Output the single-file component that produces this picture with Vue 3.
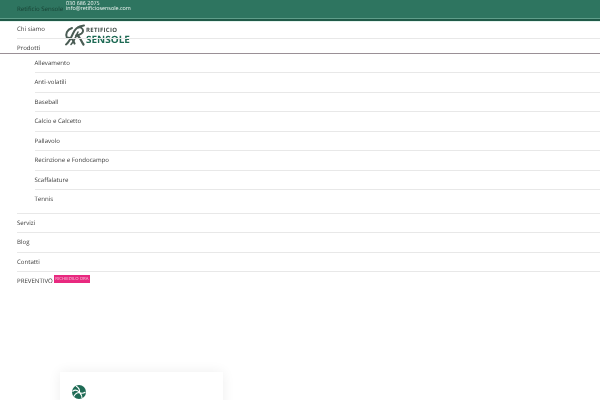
<script setup>
const subs = ['Allevamento','Anti-volatili','Baseball','Calcio e Calcetto','Pallavolo','Recinzione e Fondocampo','Scaffalature','Tennis']
</script>

<template>
  <div class="page">
    <ul class="menu">
      <li class="row first">Retificio Sensole</li>
      <li class="row">Chi siamo</li>
      <li class="parent">
        <div class="parent-label">Prodotti</div>
        <ul class="sub">
          <li v-for="s in subs" :key="s" class="subrow">{{ s }}</li>
        </ul>
      </li>
      <li class="row">Servizi</li>
      <li class="row">Blog</li>
      <li class="row">Contatti</li>
      <li class="row last">PREVENTIVO<span class="badge">RICHIEDILO ORA</span></li>
    </ul>

    <header class="header">
      <div class="topbar">
        <div class="contact">030 686 2075<br>info@retificiosensole.com</div>
      </div>
      <div class="logo">
        <svg width="22" height="23" viewBox="0 0 22 23" fill="none" stroke="#4a5c54" stroke-linecap="round">
          <path d="M2 20.500C5 18.500 7 14 9 9.500S13 2.500 20 1.500" stroke-width="2"/>
          <path d="M7 20.500C10 17.500 12 12.500 14 8" stroke-width="1.600"/>
          <path d="M3 14C1 10 3 5.500 8 4" stroke-width="2"/>
          <path d="M3 14C6 13 9 15 10.500 19.500" stroke-width="2.200"/>
          <path d="M14 3.500C19 3 20.500 7 17.500 9.500C15.500 11 13.500 11.500 12 11.500" stroke-width="1.800"/>
          <path d="M13 11.500C16 12.500 17 17 19.500 20.500" stroke-width="2.200"/>
        </svg>
        <div class="logo-text">
          <span class="l1">RETIFICIO</span>
          <span class="l2">SENSOLE</span>
        </div>
      </div>
    </header>

    <div class="card">
      <svg class="ball" width="14" height="14" viewBox="0 0 14 14">
        <circle cx="7" cy="7" r="7" fill="#1f6b55"/>
        <path d="M4 1C6.500 2.500 8 4.500 7.500 7.500M.5 6.500C3 4.500 5.500 5 7.500 7.500M1.800 11.500C3 9 5 7.500 7.500 7.500M10 13.300C10 11 9 9 7.500 7.500M13.500 7C11.500 8.500 9.500 8.500 7.500 7.500" stroke="#fff" stroke-width="1.100" fill="none"/>
      </svg>
    </div>
  </div>
</template>

<style>
html, body { margin: 0; background: #fff; }
</style>

<style scoped>
.page {
  position: relative;
  width: 600px;
  height: 400px;
  overflow: hidden;
  background: #fff;
  font-family: "Open Sans", sans-serif;
  font-size: 6.100px;
  text-rendering: geometricPrecision;
  color: #3a3a3a;
}
.menu, .sub { list-style: none; margin: 0; padding: 0; }
.menu {
  position: relative;
  z-index: 1;
  padding-left: 17px;
  will-change: transform;
}
.row {
  height: 19.500px;
  line-height: 17.500px;
  border-bottom: 1px solid #e8e8e8;
  box-sizing: border-box;
}
.first { border-bottom-color: transparent; color: #173f32; line-height: 18.500px; }
.last { border-bottom: 0; display: flex; align-items: flex-start; }
.parent { border-bottom: 1px solid #e8e8e8; padding-bottom: 3px; }
.parent-label { height: 14.500px; line-height: 17.500px; }
.sub { padding-left: 17.500px; }
.subrow {
  height: 19.500px;
  line-height: 18px;
  box-sizing: border-box;
  border-bottom: 1px solid #e8e8e8;
}
.subrow:last-child { border-bottom: 0; }
.badge {
  margin: 2.500px 0 0 1px;
  background: #e8297f;
  color: #f8c8de;
  font-size: 4.300px;
  line-height: 8px;
  height: 8px;
  padding: 0 1.500px;
}
.header {
  position: absolute;
  top: 0;
  left: 0;
  width: 600px;
  height: 54px;
  border-bottom: 1px solid #9a9096;
  box-sizing: border-box;
}
.topbar {
  height: 21px;
  background: #2e7560;
  padding-left: 66px;
  border-bottom: 2px solid #1f5a48;
  box-shadow: inset 0 -1px 0 #5f9e8a, 0 1px 0 #e4f3ee;
  box-sizing: border-box;
  will-change: transform;
}
.contact {
  color: #eef5f2;
  font-size: 5.400px;
  line-height: 5.500px;
  padding-top: 0.500px;
}
.logo {
  position: absolute;
  left: 64px;
  top: 24px;
  display: flex;
  align-items: center;
  will-change: transform;
}
.logo-text {
  display: flex;
  flex-direction: column;
  font-weight: 700;
  color: #1f6b55;
  margin-top: -1px;
}
.l1 { font-size: 6px; letter-spacing: 0.300px; line-height: 7px; color: #3d4a45; }
.l2 { font-size: 10px; line-height: 10px; }
.card {
  position: absolute;
  left: 60px;
  top: 372px;
  width: 163px;
  height: 60px;
  background: #fff;
  box-shadow: 0 0 12px rgba(0,0,0,.07);
}
.ball { position: absolute; left: 12px; top: 13px; }
</style>
